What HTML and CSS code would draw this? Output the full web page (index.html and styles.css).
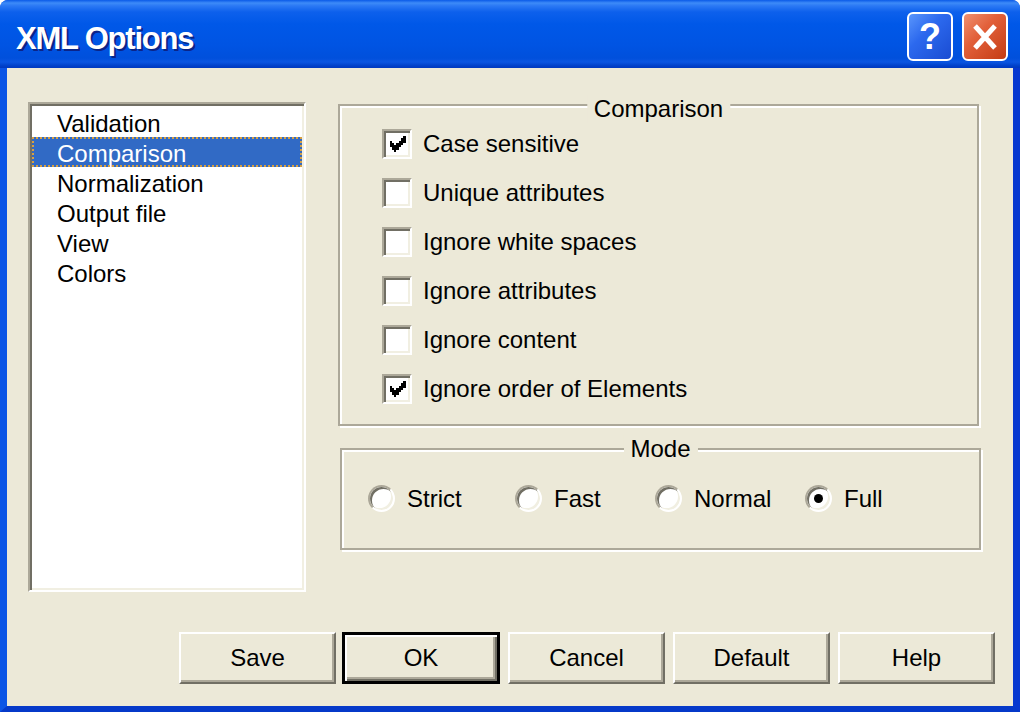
FILE: index.html
```html
<!DOCTYPE html>
<html lang="en">
<head>
<meta charset="utf-8">
<title>XML Options</title>
<link rel="stylesheet" href="styles.css">
</head>
<body>
<div class="window">
  <div class="titlebar">
    <span class="title">XML Options</span>
    <div class="tb-btns">
      <div class="tb-btn help">?</div>
      <div class="tb-btn close">
        <svg viewBox="0 0 26 28" width="26" height="28"><path d="M3 3 L23 25 M23 3 L3 25" stroke="#fff" stroke-width="5" fill="none"/></svg>
      </div>
    </div>
  </div>
  <div class="frame">
    <div class="main">
      <ul class="listbox">
        <li>Validation</li>
        <li class="selected">Comparison</li>
        <li>Normalization</li>
        <li>Output file</li>
        <li>View</li>
        <li>Colors</li>
      </ul>
      <div class="options">
        <div class="group comparison">
          <span class="group-title title-comparison">Comparison</span>
          <div class="check-row"><span class="checkbox"><svg viewBox="0 0 7 7" width="17" height="16" shape-rendering="crispEdges"><path d="M6 0h1v1h-1z M5 1h2v1h-2z M0 2h1v1h-1z M4 2h3v1h-3z M0 3h2v1h-2z M3 3h3v1h-3z M0 4h5v1h-5z M1 5h3v1h-3z M2 6h1v1h-1z" fill="#000"/></svg></span>Case sensitive</div>
          <div class="check-row"><span class="checkbox"></span>Unique attributes</div>
          <div class="check-row"><span class="checkbox"></span>Ignore white spaces</div>
          <div class="check-row"><span class="checkbox"></span>Ignore attributes</div>
          <div class="check-row"><span class="checkbox"></span>Ignore content</div>
          <div class="check-row"><span class="checkbox"><svg viewBox="0 0 7 7" width="17" height="16" shape-rendering="crispEdges"><path d="M6 0h1v1h-1z M5 1h2v1h-2z M0 2h1v1h-1z M4 2h3v1h-3z M0 3h2v1h-2z M3 3h3v1h-3z M0 4h5v1h-5z M1 5h3v1h-3z M2 6h1v1h-1z" fill="#000"/></svg></span>Ignore order of Elements</div>
        </div>
        <div class="group mode">
          <span class="group-title title-mode">Mode</span>
          <div class="radios">
            <div class="radio-item"><span class="radio"></span>Strict</div>
            <div class="radio-item"><span class="radio"></span>Fast</div>
            <div class="radio-item"><span class="radio"></span>Normal</div>
            <div class="radio-item"><span class="radio checked"></span>Full</div>
          </div>
        </div>
      </div>
    </div>
    <div class="buttons">
      <button class="btn">Save</button>
      <button class="btn btn-default">OK</button>
      <button class="btn">Cancel</button>
      <button class="btn">Default</button>
      <button class="btn">Help</button>
    </div>
  </div>
</div>
</body>
</html>
```
FILE: styles.css
```css
body {
  margin: 0;
  background: #ffffff;
  font-family: "Liberation Sans", Arial, sans-serif;
  color: #000;
}

.window {
  width: 1020px;
  height: 712px;
  display: flex;
  flex-direction: column;
  border-radius: 8px 8px 0 0;
  overflow: hidden;
  background: #0a50e0;
}

.titlebar {
  height: 68px;
  flex: none;
  box-sizing: border-box;
  display: flex;
  align-items: flex-start;
  padding: 0 12px 0 16px;
  background: linear-gradient(to bottom,
    #0a5ae8 0px, #3d8bf8 3px, #2a78f4 6px, #0d60ec 12px,
    #0058e8 24px, #0054e3 45px, #0050dc 58px, #0a55e2 62px,
    #003fc8 66px, #0038c0 68px);
}

.title {
  padding-top: 22px;
  line-height: 34px;
  font-size: 31px;
  font-weight: bold;
  letter-spacing: -1.2px;
  color: #fff;
  text-shadow: 2px 2px 0 #0b2488;
}

.tb-btns {
  margin-left: auto;
  margin-top: 12px;
  display: flex;
  gap: 9px;
}

.tb-btn {
  width: 46px;
  height: 49px;
  box-sizing: border-box;
  border: 2px solid #fff;
  border-radius: 6px;
  display: flex;
  align-items: center;
  justify-content: center;
}

.help {
  background: linear-gradient(135deg, #5a96fc 0%, #2c69ee 40%, #1a4cd2 100%);
  color: #fff;
  font-weight: bold;
  font-size: 36px;
  line-height: 1;
}

.close {
  background: linear-gradient(135deg, #f09070 0%, #e2603a 40%, #c43c14 100%);
}

.frame {
  flex: 1;
  display: flex;
  flex-direction: column;
  background: #ece9d8;
  border-left: 7px solid #0b55e6;
  border-right: 7px solid #0638d0;
  border-bottom: 6px solid #0539c9;
  padding: 34px 18px 22px 21px;
}

.main {
  display: flex;
  height: 490px;
}

.listbox {
  width: 278px;
  height: 490px;
  box-sizing: border-box;
  margin: 0;
  padding: 3px 2px 2px 2px;
  list-style: none;
  background: #fff;
  border: 2px solid;
  border-color: #aca899 #fff #fff #aca899;
  box-shadow: inset 2px 2px 0 #716f64, inset -2px -2px 0 #f1efe2;
}

.listbox li {
  height: 30px;
  line-height: 33px;
  padding-left: 25px;
  font-size: 24px;
  box-sizing: border-box;
  overflow: hidden;
}

.listbox li.selected {
  background: #316ac5;
  color: #fff;
  outline: 2px dotted #d7a042;
  outline-offset: -2px;
}

.options {
  margin-left: 32px;
  margin-top: 2px;
  display: flex;
  flex-direction: column;
}

.group {
  position: relative;
  box-sizing: border-box;
  width: 641px;
  border: 2px solid #aca899;
  box-shadow: inset 2px 2px 0 #fff, 2px 2px 0 #fff;
}

.group-title {
  position: absolute;
  left: 50%;
  transform: translateX(-50%);
  background: #ece9d8;
  padding: 0 7px;
  font-size: 24px;
  line-height: 28px;
  white-space: nowrap;
}

.title-comparison { top: -11px; }
.title-mode { top: -15px; }

.comparison {
  height: 322px;
  padding: 13px 0 0 42px;
}

.check-row {
  display: flex;
  align-items: center;
  height: 49px;
  font-size: 24px;
}

.checkbox {
  width: 30px;
  height: 30px;
  box-sizing: border-box;
  flex: none;
  border: 2px solid;
  border-color: #aca899 #fff #fff #aca899;
  box-shadow: inset 2px 2px 0 #716f64, inset -2px -2px 0 #f1efe2;
  background: #fff;
  margin-right: 11px;
  display: flex;
  align-items: center;
  justify-content: center;
}

.mode {
  margin-top: 22px;
  margin-left: 2px;
  height: 102px;
  padding: 35px 0 0 26px;
}

.radios {
  display: grid;
  grid-template-columns: 147px 140px 150px auto;
}

.radio-item {
  display: flex;
  align-items: center;
  height: 27px;
  font-size: 24px;
}

.radio {
  width: 27px;
  height: 27px;
  flex: none;
  box-sizing: border-box;
  border-radius: 50%;
  border: 2px solid;
  border-color: #aca899 #fff #fff #aca899;
  box-shadow: inset 2px 2px 0 #716f64, inset -2px -2px 0 #f1efe2;
  background: #fff;
  margin-right: 12px;
  display: flex;
  align-items: center;
  justify-content: center;
}

.radio.checked::after {
  content: "";
  width: 9px;
  height: 9px;
  border-radius: 50%;
  background: #000;
}

.buttons {
  margin-top: 40px;
  display: flex;
  justify-content: flex-end;
  gap: 8px;
}

.btn {
  width: 157px;
  height: 52px;
  box-sizing: border-box;
  margin: 0;
  padding: 0;
  border: 2px solid;
  border-color: #fff #716f64 #716f64 #fff;
  box-shadow: inset -2px -2px 0 #aca899;
  background: #ece9d8;
  font-family: "Liberation Sans", Arial, sans-serif;
  font-size: 24px;
  color: #000;
  display: flex;
  align-items: center;
  justify-content: center;
}

.btn-default {
  width: 158px;
  margin-left: -2px;
  border: 3px solid #000;
  box-shadow: inset 2px 2px 0 #fff, inset -2px -2px 0 #716f64, inset -4px -4px 0 #aca899;
}
```
